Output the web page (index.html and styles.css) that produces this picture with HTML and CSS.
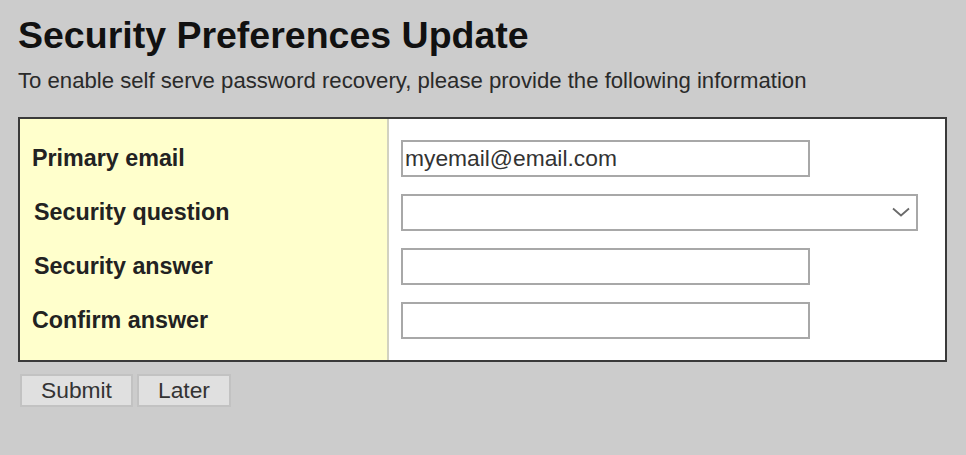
FILE: index.html
```html
<!DOCTYPE html>
<html lang="en">
<head>
<meta charset="utf-8">
<title>Security Preferences Update</title>
<link rel="stylesheet" href="styles.css">
</head>
<body>
<div class="page">
  <h1 class="title">Security Preferences Update</h1>
  <p class="intro">To enable self serve password recovery, please provide the following information</p>
  <div class="form-box">
    <div class="labels">
      <label class="label" for="email">Primary email</label>
      <label class="label label-shift" for="question">Security question</label>
      <label class="label label-shift" for="answer">Security answer</label>
      <label class="label" for="confirm">Confirm answer</label>
    </div>
    <div class="fields">
      <input class="field" id="email" type="text" value="myemail@email.com">
      <div class="select-wrap">
        <select class="field field-select" id="question"><option></option></select>
        <svg class="chevron" width="18" height="10" viewBox="0 0 18 10" aria-hidden="true"><path d="M1 1.5 L9 8.5 L17 1.5" fill="none" stroke="#6a6a6a" stroke-width="1.8"/></svg>
      </div>
      <input class="field" id="answer" type="text">
      <input class="field" id="confirm" type="text">
    </div>
  </div>
  <div class="actions">
    <button class="btn" type="button">Submit</button>
    <button class="btn" type="button">Later</button>
  </div>
</div>
</body>
</html>
```

FILE: styles.css
```css
html, body {
  margin: 0;
  padding: 0;
  background: #cccccc;
}
body {
  font-family: "Liberation Sans", Arial, sans-serif;
  color: #222;
}
.page {
  padding: 14px 18px 0 18px;
}
.title {
  margin: 0;
  font-size: 37.5px;
  line-height: 42px;
  font-weight: bold;
  color: #111;
}
.intro {
  margin: 12px 0 0 0;
  font-size: 22.15px;
  line-height: 25px;
  color: #2a2a2a;
}
.form-box {
  margin-top: 24px;
  width: 925px;
  border: 2px solid #3a3a3a;
  display: flex;
  background: #fff;
}
.labels {
  width: 355px;
  flex: none;
  background: #ffffcc;
  border-right: 2px solid #d2d2c0;
  padding: 21px 0 21px 12px;
  display: flex;
  flex-direction: column;
  gap: 17px;
}
.label {
  height: 37px;
  display: flex;
  align-items: center;
  font-size: 23.3px;
  font-weight: bold;
  color: #222;
}
.label-shift {
  padding-left: 2px;
}
.fields {
  flex: 1;
  padding: 21px 0 21px 12px;
  display: flex;
  flex-direction: column;
  align-items: flex-start;
  gap: 17px;
}
.field {
  box-sizing: border-box;
  width: 409px;
  height: 37px;
  margin: 0;
  border: 2px solid #a8a8a8;
  background: #fff;
  padding: 0 2px;
  font-family: "Liberation Sans", Arial, sans-serif;
  font-size: 22.8px;
  color: #333;
  outline: none;
}
.select-wrap {
  position: relative;
  width: 517px;
  height: 37px;
}
.field-select {
  width: 517px;
  appearance: none;
  -webkit-appearance: none;
  border-radius: 0;
}
.chevron {
  position: absolute;
  left: 491px;
  top: 13px;
}
.actions {
  margin-top: 12px;
  margin-left: 2px;
  display: flex;
  gap: 4px;
}
.btn {
  box-sizing: border-box;
  height: 33px;
  padding: 0 19px;
  margin: 0;
  border: 2px solid #c2c2c2;
  background: #e0e0e0;
  font-family: "Liberation Sans", Arial, sans-serif;
  font-size: 22.8px;
  color: #333;
  border-radius: 0;
}
```
